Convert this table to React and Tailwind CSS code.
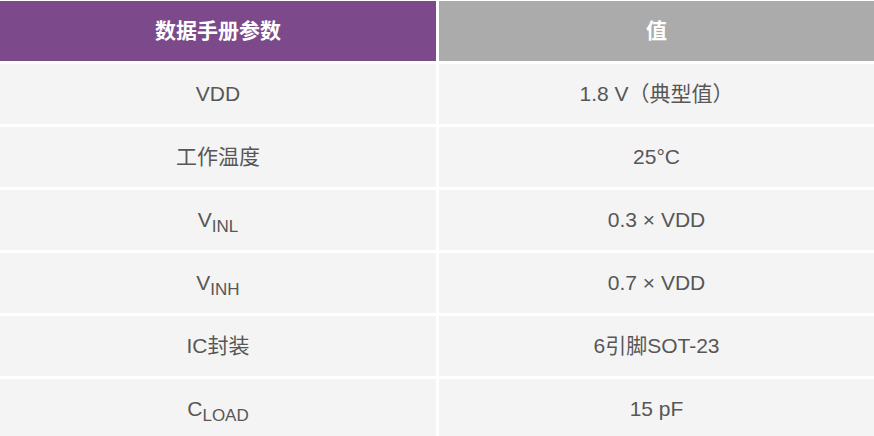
const rows = [
  { name: 'VDD', value: '1.8 V（典型值）' },
  { name: '工作温度', value: '25°C' },
  { name: <>V<sub className="text-[17px]">INL</sub></>, value: '0.3 × VDD' },
  { name: <>V<sub className="text-[17px]">INH</sub></>, value: '0.7 × VDD' },
  { name: 'IC封装', value: '6引脚SOT-23' },
  { name: <>C<sub className="text-[17px]">LOAD</sub></>, value: '15 pF' },
];

export default function App() {
  return (
    <div
      className="w-[874px] h-[436px] overflow-hidden bg-white pt-px"
      style={{ fontFamily: '"Liberation Sans", Arial, "Noto Sans CJK SC", sans-serif' }}
    >
      <div className="grid grid-cols-[436px_435px] gap-x-[3px] gap-y-[3px]">
        <div className="h-[60px] bg-[#7c4a8a] flex items-center justify-center text-white font-bold text-[21px]">
          数据手册参数
        </div>
        <div className="h-[60px] bg-[#ababab] flex items-center justify-center text-white font-bold text-[21px]">
          值
        </div>
        {rows.map((r, i) => (
          <div key={i} className="contents">
            <div className="h-[60px] bg-[#f4f4f4] flex items-center justify-center text-[#575757] text-[21px]">
              <span>{r.name}</span>
            </div>
            <div className="h-[60px] bg-[#f4f4f4] flex items-center justify-center text-[#575757] text-[21px]">
              <span>{r.value}</span>
            </div>
          </div>
        ))}
      </div>
    </div>
  );
}
